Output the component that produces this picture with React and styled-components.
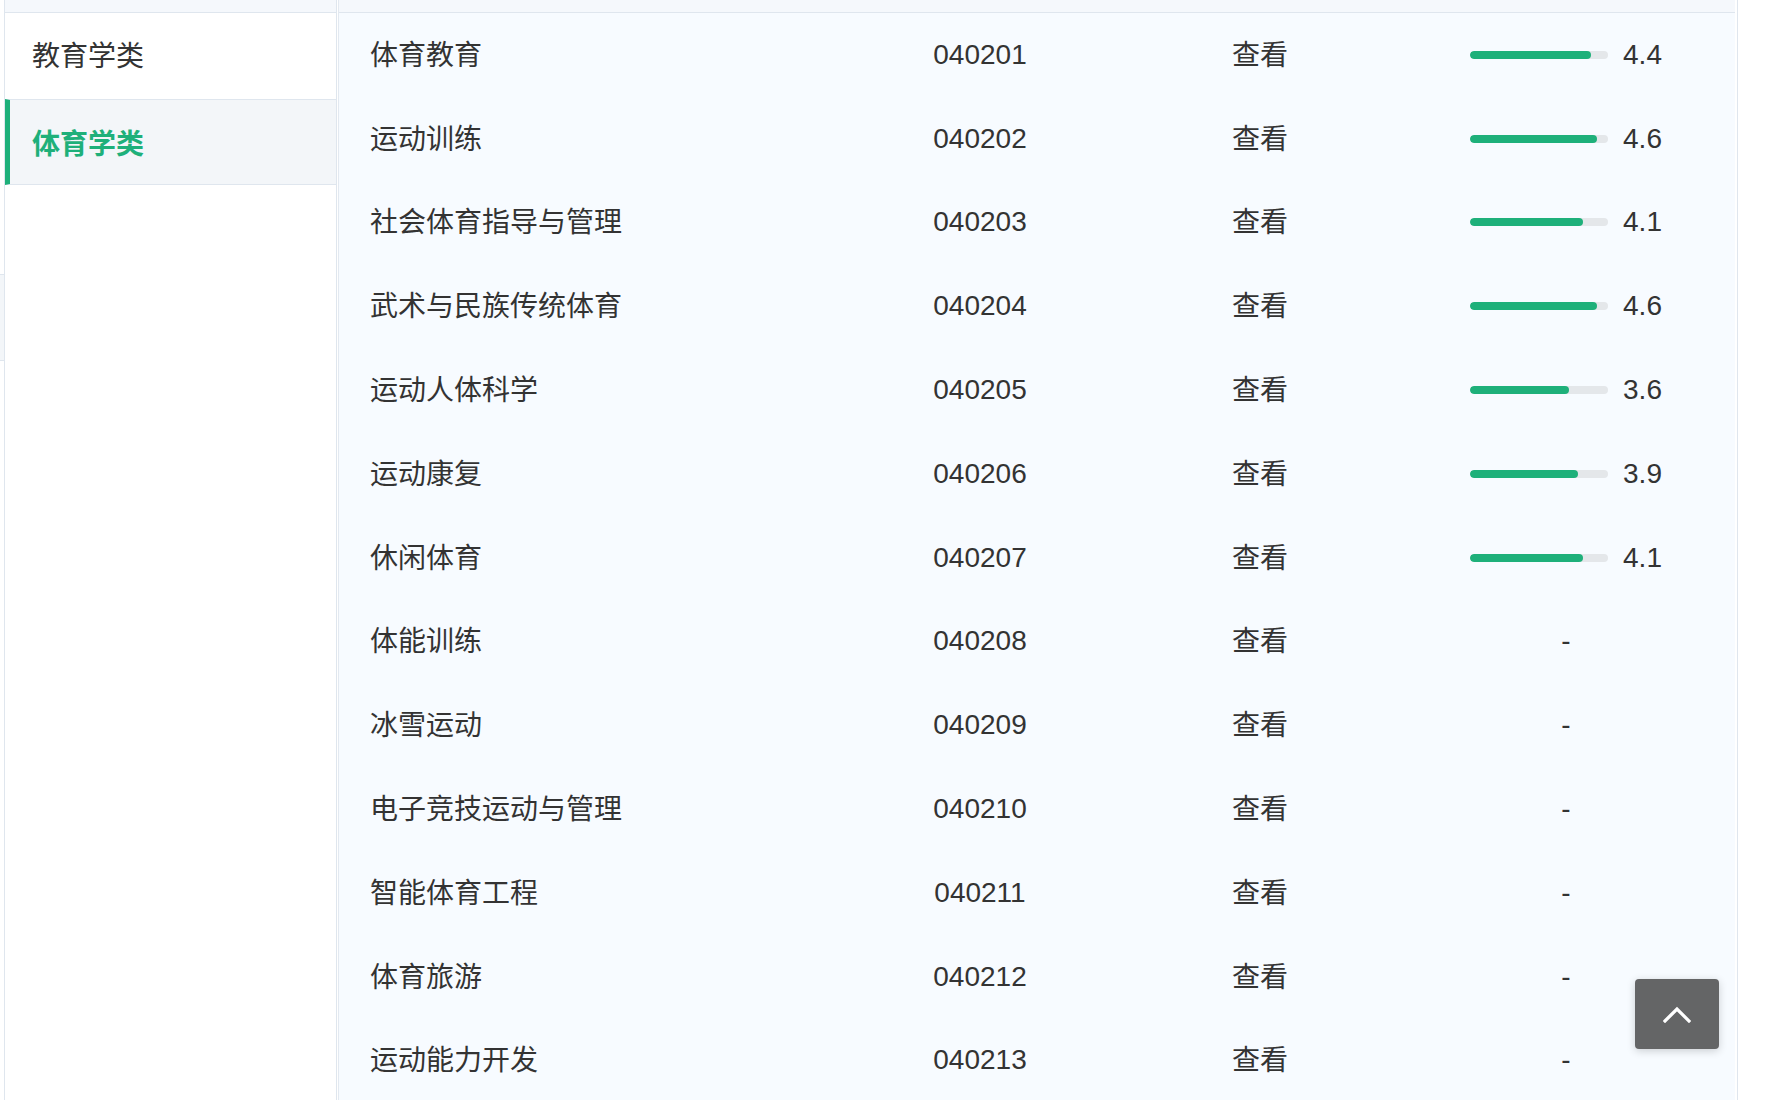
import React from "react";
import styled, { createGlobalStyle } from "styled-components";

const GlobalStyle = createGlobalStyle`
  html, body {
    margin: 0;
    padding: 0;
    background: #ffffff;
    overflow: hidden;
  }
  body {
    font-family: "Liberation Sans", "Noto Sans CJK SC", sans-serif;
    color: #333333;
  }
`;

const Page = styled.div`
  display: flex;
  min-height: 100vh;
  width: 1766px;
`;

const Gutter = styled.div`
  width: 4px;
  display: flex;
  flex-direction: column;
`;

const GutterTab = styled.div`
  margin-top: 274px;
  height: 85px;
  background: #f3f6f9;
  border-top: 1px solid #dfe6ee;
  border-bottom: 1px solid #dfe6ee;
`;

const Frame = styled.div`
  display: flex;
  width: 1730px;
  min-height: 100vh;
  border-left: 1px solid #dfe6ee;
  border-right: 1px solid #dfe6ee;
  padding-right: 2px;
  box-sizing: content-box;
`;

const Sidebar = styled.aside`
  width: 331px;
  flex: none;
  border-right: 1px solid #dfe6ee;
  display: flex;
  flex-direction: column;
  background: #ffffff;
`;

const HeaderStub = styled.div`
  height: 12px;
  flex: none;
  background: #f5f8fc;
  border-bottom: 1px solid #dfe6ee;
`;

const NavItem = styled.div`
  height: 86px;
  box-sizing: border-box;
  display: flex;
  align-items: center;
  padding-left: ${(p) => (p.$active ? "22px" : "27px")};
  padding-bottom: ${(p) => (p.$active ? "0" : "4px")};
  font-size: 28px;
  font-weight: ${(p) => (p.$active ? 700 : 400)};
  color: ${(p) => (p.$active ? "#1eb07a" : "#333333")};
  background: ${(p) => (p.$active ? "#f3f6f9" : "#ffffff")};
  border-left: ${(p) => (p.$active ? "5px solid #1eb07a" : "none")};
  border-top: ${(p) => (p.$active ? "1px solid #dfe6ee" : "none")};
  border-bottom: ${(p) => (p.$active ? "1px solid #dfe6ee" : "none")};
`;

const Main = styled.main`
  flex: 1;
  margin-left: 1px;
  border-left: 1px solid #e3e9f0;
  background: #f7fbff;
  display: flex;
  flex-direction: column;
`;

const Row = styled.div`
  display: grid;
  grid-template-columns: 500px 282px 278px 334px;
  height: 83.8px;
  flex: none;
  align-items: center;
  font-size: 28px;
  color: #333333;
`;

const NameCell = styled.div`
  padding-left: 31px;
  margin-bottom: 4px;
  white-space: nowrap;
`;

const CenterCell = styled.div`
  text-align: center;
  white-space: nowrap;
  margin-bottom: ${(p) => (p.$cjk ? "4px" : "0")};
`;

const RatingCell = styled.div`
  display: flex;
  align-items: center;
  justify-content: center;
  gap: 15px;
`;

const Track = styled.div`
  width: 138px;
  height: 8px;
  border-radius: 4px;
  background: #e4e7ea;
  overflow: hidden;
`;

const Fill = styled.div`
  height: 100%;
  border-radius: 4px;
  background: #1eb07a;
`;

const Score = styled.span`
  font-size: 28px;
  color: #333333;
`;

const Dash = styled.span`
  font-size: 28px;
  color: #333333;
`;

const BackTop = styled.button`
  position: fixed;
  right: 47px;
  bottom: 51px;
  width: 84px;
  height: 70px;
  border: none;
  border-radius: 4px;
  background: #646566;
  box-shadow: 0 2px 8px rgba(0, 0, 0, 0.18);
  display: flex;
  align-items: center;
  justify-content: center;
  padding: 0;
  cursor: pointer;
`;

const rows = [
  ["体育教育", "040201", 4.4],
  ["运动训练", "040202", 4.6],
  ["社会体育指导与管理", "040203", 4.1],
  ["武术与民族传统体育", "040204", 4.6],
  ["运动人体科学", "040205", 3.6],
  ["运动康复", "040206", 3.9],
  ["休闲体育", "040207", 4.1],
  ["体能训练", "040208", null],
  ["冰雪运动", "040209", null],
  ["电子竞技运动与管理", "040210", null],
  ["智能体育工程", "040211", null],
  ["体育旅游", "040212", null],
  ["运动能力开发", "040213", null],
];

export default function App() {
  return (
    <>
      <GlobalStyle />
      <Page>
        <Gutter>
          <GutterTab />
        </Gutter>
        <Frame>
          <Sidebar>
            <HeaderStub />
            <NavItem>教育学类</NavItem>
            <NavItem $active>体育学类</NavItem>
          </Sidebar>
          <Main>
            <HeaderStub />
            {rows.map(([name, code, score]) => (
              <Row key={code}>
                <NameCell>{name}</NameCell>
                <CenterCell>{code}</CenterCell>
                <CenterCell $cjk>查看</CenterCell>
                {score != null ? (
                  <RatingCell>
                    <Track>
                      <Fill style={{ width: `${(score / 5) * 100}%` }} />
                    </Track>
                    <Score>{score.toFixed(1)}</Score>
                  </RatingCell>
                ) : (
                  <RatingCell>
                    <Dash>-</Dash>
                  </RatingCell>
                )}
              </Row>
            ))}
          </Main>
        </Frame>
      </Page>
      <BackTop aria-label="返回顶部">
        <svg width="28" height="17" viewBox="0 0 28 17" fill="none">
          <path
            d="M2 15 L14 3 L26 15"
            stroke="#ffffff"
            strokeWidth="3.2"
            strokeLinecap="square"
            strokeLinejoin="miter"
          />
        </svg>
      </BackTop>
    </>
  );
}
